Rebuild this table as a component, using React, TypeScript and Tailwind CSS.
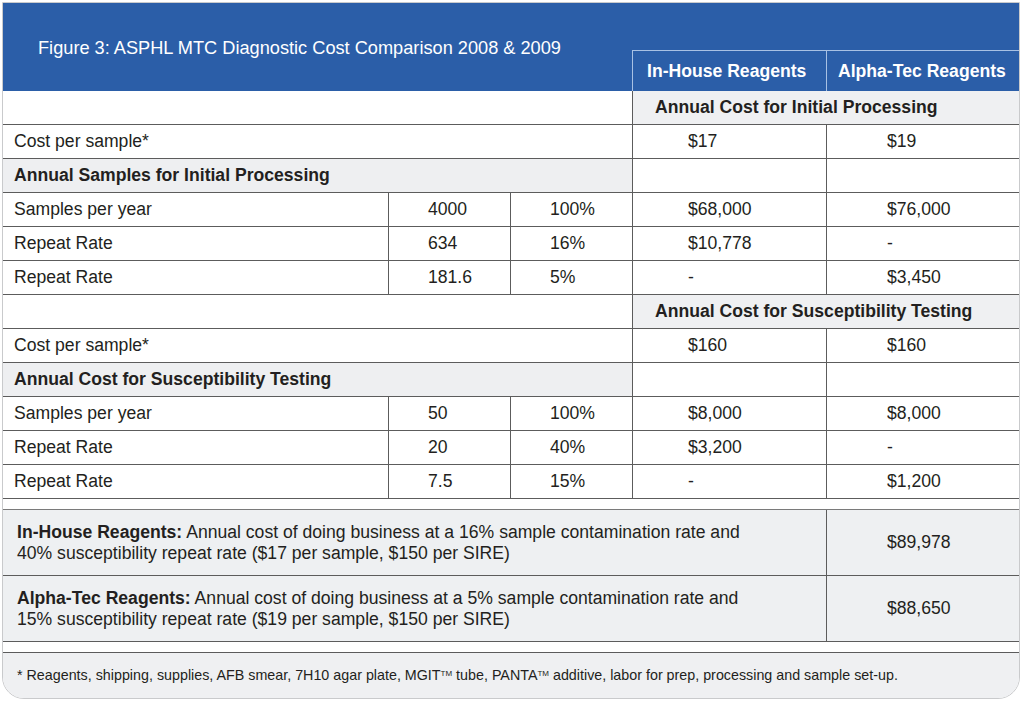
const line = "border-[#5c5c5c]";

type DataRow = { label: string; n: string; pct: string; a: string; b: string };

const initialRows: DataRow[] = [
  { label: "Samples per year", n: "4000", pct: "100%", a: "$68,000", b: "$76,000" },
  { label: "Repeat Rate", n: "634", pct: "16%", a: "$10,778", b: "-" },
  { label: "Repeat Rate", n: "181.6", pct: "5%", a: "-", b: "$3,450" },
];

const suscRows: DataRow[] = [
  { label: "Samples per year", n: "50", pct: "100%", a: "$8,000", b: "$8,000" },
  { label: "Repeat Rate", n: "20", pct: "40%", a: "$3,200", b: "-" },
  { label: "Repeat Rate", n: "7.5", pct: "15%", a: "-", b: "$1,200" },
];

function SpanHeader({ title }: { title: string }) {
  return (
    <div className={`flex h-[34px] border-b ${line}`}>
      <div className="w-[629px] bg-white" />
      <div className={`flex flex-1 items-center border-l ${line} bg-[#eff0f2] pl-[22px] font-bold`}>
        {title}
      </div>
    </div>
  );
}

function CostRow({ a, b }: { a: string; b: string }) {
  return (
    <div className={`flex h-[34px] border-b ${line}`}>
      <div className="flex w-[629px] items-center pl-[11px]">Cost per sample*</div>
      <div className={`flex w-[194px] items-center border-l ${line} pl-[55px]`}>{a}</div>
      <div className={`flex flex-1 items-center border-l ${line} pl-[60px]`}>{b}</div>
    </div>
  );
}

function SectionRow({ title }: { title: string }) {
  return (
    <div className={`flex h-[34px] border-b ${line}`}>
      <div className="flex w-[629px] items-center bg-[#eeeff1] pl-[11px] font-bold">{title}</div>
      <div className={`w-[194px] border-l ${line}`} />
      <div className={`flex-1 border-l ${line}`} />
    </div>
  );
}

function Row({ r }: { r: DataRow }) {
  return (
    <div className={`flex h-[34px] border-b ${line}`}>
      <div className="flex w-[385px] items-center pl-[11px]">{r.label}</div>
      <div className={`flex w-[122px] items-center border-l ${line} pl-[39px]`}>{r.n}</div>
      <div className={`flex w-[122px] items-center border-l ${line} pl-[39px]`}>{r.pct}</div>
      <div className={`flex w-[194px] items-center border-l ${line} pl-[55px]`}>{r.a}</div>
      <div className={`flex flex-1 items-center border-l ${line} pl-[60px]`}>{r.b}</div>
    </div>
  );
}

function Summary({ who, rest1, line2, total }: { who: string; rest1: string; line2: string; total: string }) {
  return (
    <div className={`flex h-[66px] border-b ${line} bg-[#eef0f2]`}>
      <div className="flex w-[823px] flex-col justify-center pl-[14px] leading-[21px]">
        <div>
          <span className="font-bold">{who}</span> {rest1}
        </div>
        <div>{line2}</div>
      </div>
      <div className={`flex flex-1 items-center border-l ${line} pl-[60px]`}>{total}</div>
    </div>
  );
}

export default function App() {
  return (
    <div
      className="min-h-[702px] bg-white pl-[2px] pt-[2px] text-[17.6px] text-[#231f20]"
      style={{ fontFamily: '"Liberation Sans", Arial, sans-serif' }}
    >
      <div className="w-[1018px] overflow-hidden rounded-b-[22px] border border-[#c9cacc]">
        <div className="flex h-[88px] bg-[#2b5ea8] text-white">
          <div className="flex-1 pl-[35px] pt-[34px] text-[18.2px] leading-[22px]">
            Figure 3: ASPHL MTC Diagnostic Cost Comparison 2008 &amp; 2009
          </div>
          <div className="flex self-end">
            <div className="flex h-[41px] w-[194px] items-center border-l border-t border-[#a8c1e4] pl-[14px] font-bold">
              In-House Reagents
            </div>
            <div className="flex h-[41px] w-[193px] items-center border-l border-t border-[#a8c1e4] pl-[11px] font-bold">
              Alpha-Tec Reagents
            </div>
          </div>
        </div>

        <SpanHeader title="Annual Cost for Initial Processing" />
        <CostRow a="$17" b="$19" />
        <SectionRow title="Annual Samples for Initial Processing" />
        {initialRows.map((r, i) => (
          <Row key={i} r={r} />
        ))}

        <SpanHeader title="Annual Cost for Susceptibility Testing" />
        <CostRow a="$160" b="$160" />
        <SectionRow title="Annual Cost for Susceptibility Testing" />
        {suscRows.map((r, i) => (
          <Row key={i} r={r} />
        ))}

        <div className="h-[11px] border-b border-[#7a7a7a]" />
        <Summary
          who="In-House Reagents:"
          rest1="Annual cost of doing business at a 16% sample contamination rate and"
          line2="40% susceptibility repeat rate ($17 per sample, $150 per SIRE)"
          total="$89,978"
        />
        <Summary
          who="Alpha-Tec Reagents:"
          rest1="Annual cost of doing business at a 5% sample contamination rate and"
          line2="15% susceptibility repeat rate ($19 per sample, $150 per SIRE)"
          total="$88,650"
        />
        <div className={`h-[11px] border-b ${line}`} />
        <div className="flex h-[45px] items-center bg-[#eff0f2] pl-[14px] text-[14.3px]">
          <span>
            * Reagents, shipping, supplies, AFB smear, 7H10 agar plate, MGIT
            <sup className="text-[8px]">TM</sup> tube, PANTA<sup className="text-[8px]">TM</sup> additive, labor for
            prep, processing and sample set-up.
          </span>
        </div>
      </div>
    </div>
  );
}
